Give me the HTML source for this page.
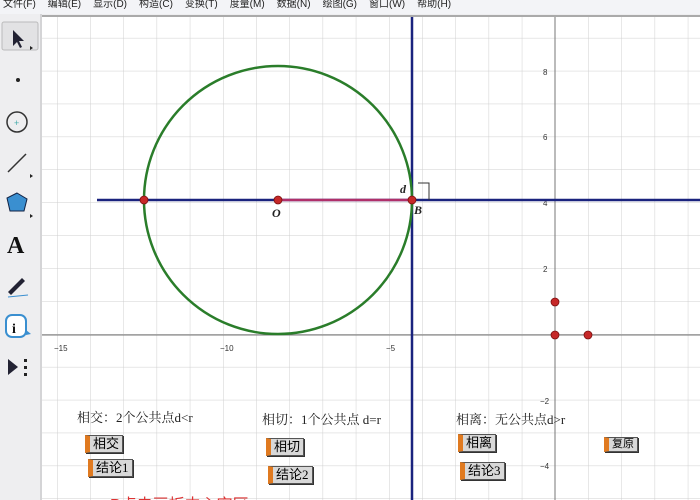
<!DOCTYPE html>
<html><head><meta charset="utf-8"><style>
body{margin:0;width:700px;height:500px;overflow:hidden;background:#fff;font-family:"Liberation Sans","Noto Sans CJK SC",sans-serif}
.menu{position:absolute;left:0;top:0;width:700px;height:14px;background:#f3f4f7;font-size:10px;color:#222;line-height:10px;white-space:nowrap}
.menu span{margin-left:3px;margin-right:9px}
.btn{position:absolute;font-size:13px;background:#d8d8d8;border:1px solid #555;border-left:5px solid #e07a20;padding:0 3px;line-height:16px;box-shadow:1px 1px 0 #333;font-family:"Liberation Serif","Noto Sans CJK SC",sans-serif}
.lbl{position:absolute;font-size:13px;font-family:"Liberation Serif","Noto Serif CJK SC",serif;color:#222}
</style></head><body>
<div class="menu"><span>文件(F)</span><span>编辑(E)</span><span>显示(D)</span><span>构造(C)</span><span>变换(T)</span><span>度量(M)</span><span>数据(N)</span><span>绘图(G)</span><span>窗口(W)</span><span>帮助(H)</span></div>
<svg width="700" height="500" style="position:absolute;left:0;top:0">
<defs><pattern id="g" patternUnits="userSpaceOnUse" x="23.8" y="5" width="33.2" height="32.9"><path d="M0 0V32.9M0 0H33.2" stroke="#cfcfcf" stroke-width="1" fill="none"/></pattern></defs>
<rect x="0" y="14" width="700" height="486" fill="#eeeef0"/>
<rect x="42" y="17" width="658" height="483" fill="#fff"/>
<rect x="42" y="17" width="658" height="483" fill="url(#g)"/>
<line x1="42" y1="16" x2="700" y2="16" stroke="#aaa" stroke-width="2"/>
<line x1="41" y1="14" x2="41" y2="500" stroke="#bbb"/>
<rect x="2" y="22" width="36" height="28" fill="#e2e2e4" stroke="#bbb" rx="2"/>
<line x1="555" y1="17" x2="555" y2="500" stroke="#777" stroke-width="1"/>
<line x1="42" y1="335" x2="700" y2="335" stroke="#777" stroke-width="1"/>
<g font-size="8" fill="#333" font-family="Liberation Sans">
<text x="54" y="351">−15</text><text x="220" y="351">−10</text><text x="386" y="351">−5</text>
<text x="543" y="75">8</text><text x="543" y="140">6</text><text x="543" y="206">4</text><text x="543" y="272">2</text><text x="540" y="404">−2</text><text x="540" y="469">−4</text>
</g>
<line x1="412" y1="17" x2="412" y2="500" stroke="#1a237e" stroke-width="2.5"/>
<line x1="97" y1="200" x2="700" y2="200" stroke="#1a237e" stroke-width="2.5"/>
<circle cx="278" cy="200" r="134" fill="none" stroke="#2a7d2a" stroke-width="2.5"/>
<line x1="282" y1="200" x2="410" y2="200" stroke="#b0306a" stroke-width="2.5"/>
<path d="M418 183H429V200" fill="none" stroke="#333" stroke-width="1"/>
<g fill="#c62828" stroke="#7a1010" stroke-width="0.8">
<circle cx="144" cy="200" r="4"/><circle cx="278" cy="200" r="4"/><circle cx="412" cy="200" r="4"/>
<circle cx="555" cy="302" r="4"/><circle cx="555" cy="335" r="4"/><circle cx="588" cy="335" r="4"/>
</g>
<g font-family="Liberation Serif" font-style="italic" font-weight="bold" font-size="12" fill="#222">
<text x="272" y="217">O</text><text x="414" y="214">B</text><text x="400" y="193">d</text>
</g>
<path d="M13 30L13 46L17 42L20 48L22 47L19 41L24 41Z" fill="#223"/>
<path d="M30 46l3 2-3 2z" fill="#222"/>
<circle cx="18" cy="80" r="2" fill="#222"/>
<circle cx="17" cy="122" r="10" fill="none" stroke="#333" stroke-width="1.5"/>
<text x="14" y="126" font-size="9" fill="#4aa">+</text>
<line x1="8" y1="172" x2="26" y2="154" stroke="#333" stroke-width="1.5"/>
<path d="M30 174l3 2-3 2z" fill="#222"/>
<path d="M17 193L27 199L24 211L10 211L7 198Z" fill="#3a8fd0" stroke="#124" stroke-width="1"/>
<path d="M30 214l3 2-3 2z" fill="#222"/>
<text x="7" y="253" font-family="Liberation Serif" font-weight="bold" font-size="24" fill="#111">A</text>
<path d="M8 292L22 278L25 281L11 295Z" fill="#223"/><line x1="8" y1="297" x2="28" y2="295" stroke="#3a8fd0"/>
<rect x="6" y="315" width="20" height="22" rx="6" fill="#fff" stroke="#3a8fd0" stroke-width="2"/>
<path d="M26 330l5 4-5 1z" fill="#3a8fd0"/>
<text x="12" y="333" font-family="Liberation Serif" font-weight="bold" font-size="14" fill="#111">i</text>
<path d="M8 359L18 367L8 375Z" fill="#223"/>
<rect x="24" y="359" width="3" height="3" fill="#222"/><rect x="24" y="366" width="3" height="3" fill="#222"/><rect x="24" y="373" width="3" height="3" fill="#222"/>
<text x="110" y="510" font-size="16" fill="#d33">P点击画板中心空区</text>
</svg>
<div class="lbl" style="left:77px;top:407px">相交：2个公共点d&lt;r</div>
<div class="lbl" style="left:262px;top:409px">相切：1个公共点 d=r</div>
<div class="lbl" style="left:456px;top:409px">相离：无公共点d&gt;r</div>
<div class="btn" style="left:85px;top:435px">相交</div>
<div class="btn" style="left:88px;top:459px">结论1</div>
<div class="btn" style="left:266px;top:438px">相切</div>
<div class="btn" style="left:268px;top:466px">结论2</div>
<div class="btn" style="left:458px;top:434px">相离</div>
<div class="btn" style="left:460px;top:462px">结论3</div>
<div class="btn" style="left:604px;top:437px;font-size:11px;line-height:13px">复原</div>
</body></html>
